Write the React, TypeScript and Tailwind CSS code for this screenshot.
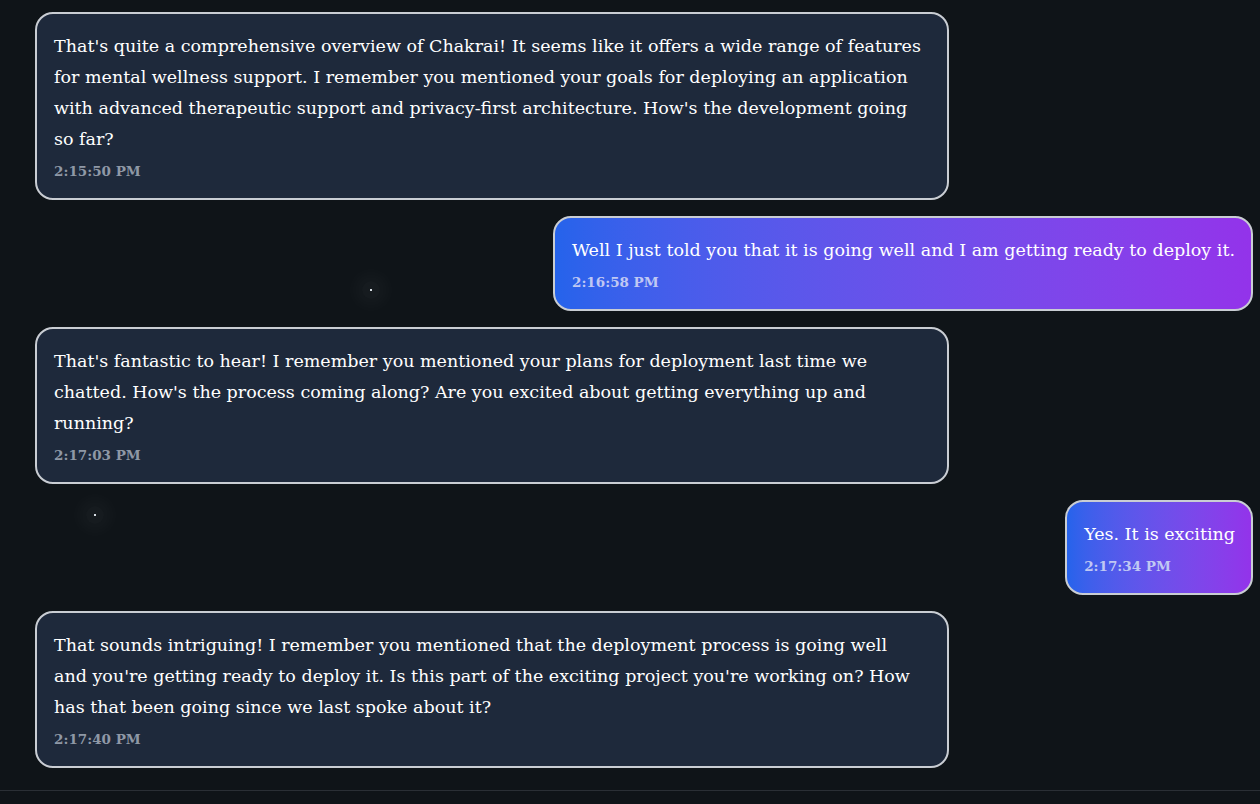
import React from 'react';

type Msg = { role: 'ai' | 'user'; text: string; time: string };

const messages: Msg[] = [
  {
    role: 'ai',
    text: "That's quite a comprehensive overview of Chakrai! It seems like it offers a wide range of features for mental wellness support. I remember you mentioned your goals for deploying an application with advanced therapeutic support and privacy-first architecture. How's the development going so far?",
    time: '2:15:50 PM',
  },
  {
    role: 'user',
    text: 'Well I just told you that it is going well and I am getting ready to deploy it.',
    time: '2:16:58 PM',
  },
  {
    role: 'ai',
    text: "That's fantastic to hear! I remember you mentioned your plans for deployment last time we chatted. How's the process coming along? Are you excited about getting everything up and running?",
    time: '2:17:03 PM',
  },
  { role: 'user', text: 'Yes. It is exciting', time: '2:17:34 PM' },
  {
    role: 'ai',
    text: "That sounds intriguing! I remember you mentioned that the deployment process is going well and you're getting ready to deploy it. Is this part of the exciting project you're working on? How has that been going since we last spoke about it?",
    time: '2:17:40 PM',
  },
];

const Bubble: React.FC<{ m: Msg }> = ({ m }) => {
  const isUser = m.role === 'user';
  return (
    <div className={`flex ${isUser ? 'justify-end' : 'justify-start'}`}>
      <div
        className={`max-w-[75%] rounded-[18px] border-2 border-[#c9cdd3] pt-[17px] pb-[15px] ${
          isUser
            ? 'bg-gradient-to-r from-[#2563eb] to-[#9333ea] pl-[17px] pr-4'
            : 'bg-[#1e293b] pl-[17px] pr-[22px]'
        }`}
      >
        <p className="text-[17.5px] leading-[31px] text-white">{m.text}</p>
        <p className={`mt-1 text-[13.5px] leading-6 font-bold ${isUser ? 'text-[#c0c8f3]' : 'text-[#8f98a6]'}`}>
          {m.time}
        </p>
      </div>
    </div>
  );
};

export default function App() {
  return (
    <div
      className="relative flex h-[804px] w-[1260px] flex-col overflow-hidden bg-[#0f1418]"
      style={{ fontFamily: '"DejaVu Serif", "Liberation Serif", serif' }}
    >
      {/* twinkles */}
      <div className="absolute left-[362px] top-[281px] h-[18px] w-[18px] rounded-full bg-white/[0.03] shadow-[0_0_16px_8px_rgba(255,255,255,0.03)]" />
      <div className="absolute left-[370px] top-[289px] h-[2px] w-[2px] bg-[#d6dde3]" />
      <div className="absolute left-[86px] top-[506px] h-[18px] w-[18px] rounded-full bg-white/[0.03] shadow-[0_0_16px_8px_rgba(255,255,255,0.03)]" />
      <div className="absolute left-[94px] top-[514px] h-[2px] w-[2px] bg-[#d6dde3]" />

      <div className="flex flex-1 flex-col gap-4 pt-3 pl-[35px] pr-[7px]">
        {messages.map((m, i) => (
          <Bubble key={i} m={m} />
        ))}
      </div>
      <div className="h-[14px] border-t border-[#2a2f35]" />
    </div>
  );
}
